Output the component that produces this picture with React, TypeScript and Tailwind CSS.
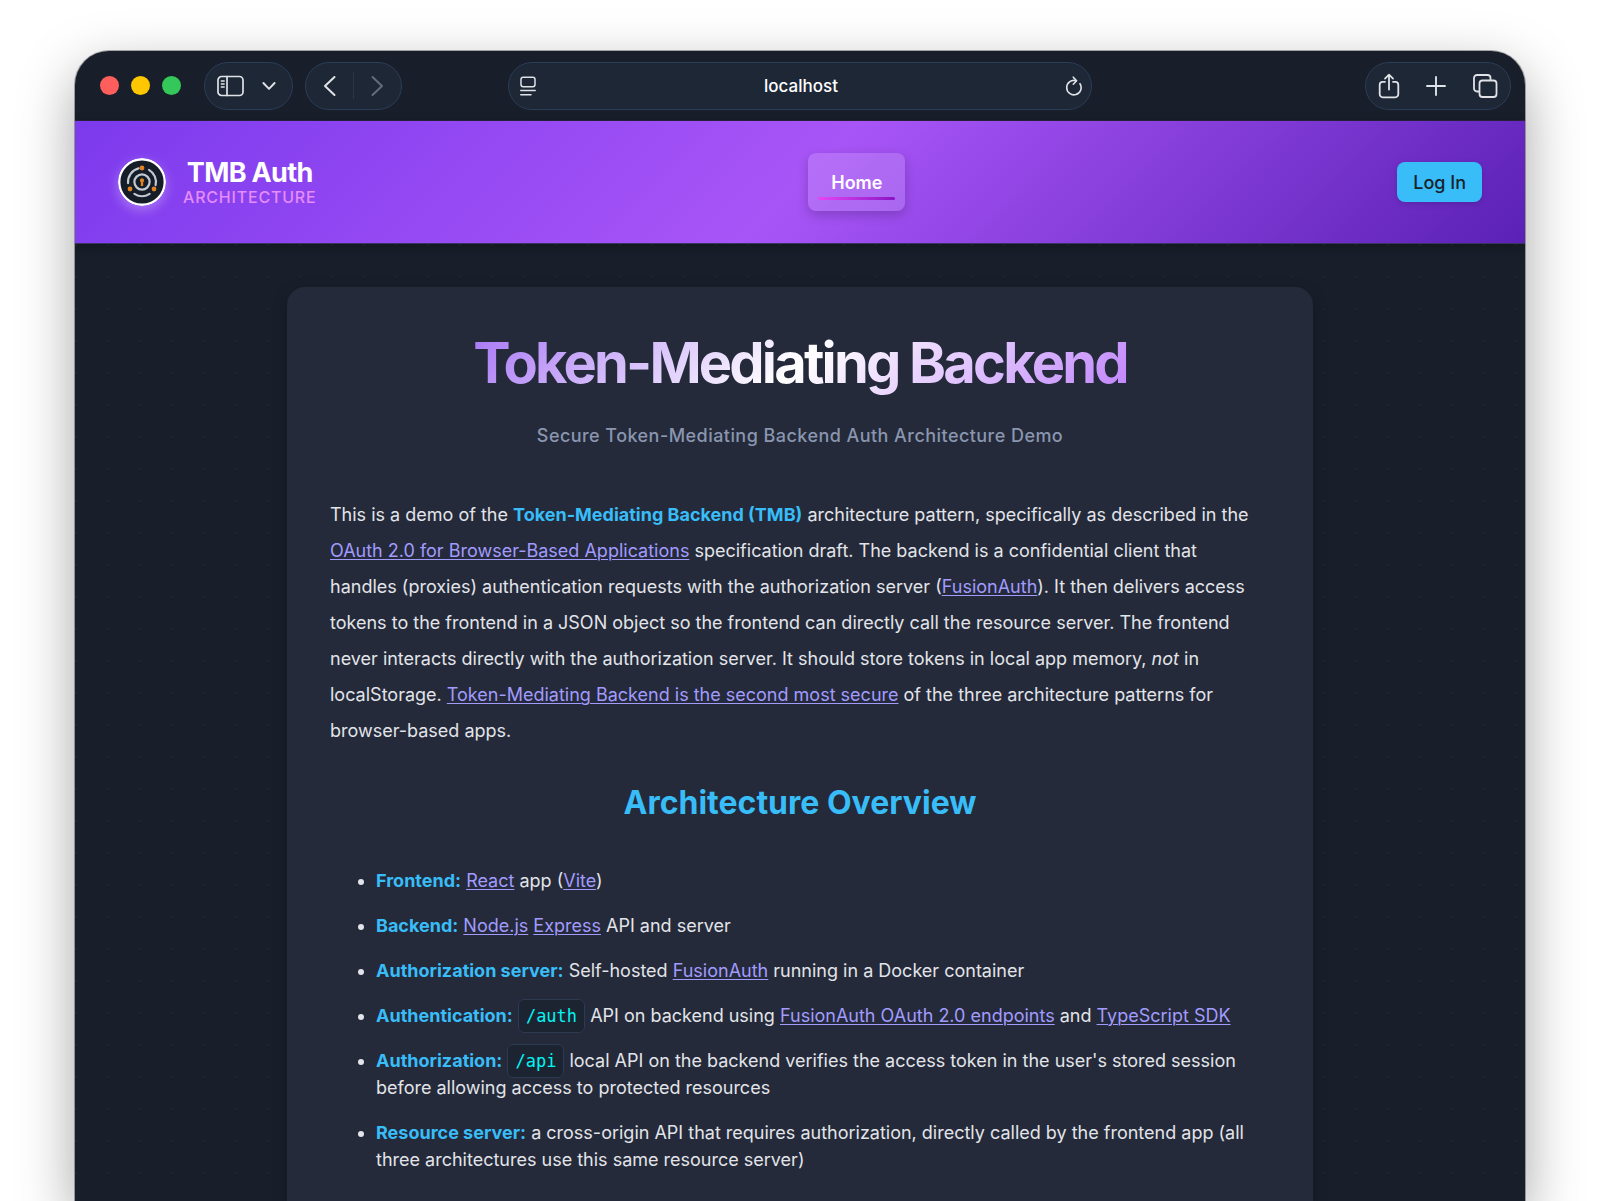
import React from "react";

const linkClass = "text-[#a29bfe] underline underline-offset-2 decoration-1";

function A({ children }: { children: React.ReactNode }) {
  return (
    <a href="#" className={linkClass}>
      {children}
    </a>
  );
}

function B({ children }: { children: React.ReactNode }) {
  return <strong className="font-bold text-[#38bdf8]">{children}</strong>;
}

function Code({ children }: { children: React.ReactNode }) {
  return (
    <code className="rounded-md border border-[#2c3a54] bg-[#1d2431] px-[7px] py-[6px] font-['DejaVu_Sans_Mono',monospace] text-[17px] leading-none text-[#00f5f5]">
      {children}
    </code>
  );
}

function LogoMark() {
  return (
    <svg viewBox="0 0 48 48" className="size-12 rounded-full shadow-[0_4px_12px_rgba(255,255,255,0.3)]" fill="none" aria-hidden="true">
      <circle cx="24" cy="24" r="22.8" fill="#141d28" stroke="#fff" strokeWidth="2.4" />
      <g stroke="#c3c9d2" strokeWidth="2.2" strokeLinecap="round">
        <circle cx="24" cy="24" r="7.6" />
        <path d="M10.1 25.2A14 14 0 0 1 20.6 10.4" />
        <path d="M31 11.9A14 14 0 0 1 37.6 27.1" />
        <path d="M31.6 35.8A14 14 0 0 1 16.4 35.8" />
      </g>
      <g fill="#e08222">
        <circle cx="24" cy="10" r="2.4" />
        <circle cx="12" cy="31" r="2.4" />
        <circle cx="36" cy="31" r="2.4" />
        <path d="M24 20.300a2.200 2.200 0 0 1 1.200 4V28h-2.400v-3.700a2.200 2.200 0 0 1 1.200-4z" />
      </g>
    </svg>
  );
}

const pill =
  "flex h-12 items-center rounded-full border border-[#2b3d57] bg-[#1e2735] text-[#dfe3e8]";

function Toolbar() {
  return (
    <div className="grid h-[70px] grid-cols-[1fr_minmax(0,584px)_1fr] items-center border-b border-[#2b2540]">
      <div className="flex items-center pl-[25px]">
        <div className="flex gap-3">
          <button aria-label="Close" className="size-[19px] rounded-full bg-[#ff5f5c]" />
          <button aria-label="Minimize" className="size-[19px] rounded-full bg-[#fec700]" />
          <button aria-label="Zoom" className="size-[19px] rounded-full bg-[#34c759]" />
        </div>
        <div className={`${pill} ml-[23px] gap-[17px] px-3`}>
          <button aria-label="Sidebar">
            <svg width="28" height="22" viewBox="0 0 28 22" fill="none" stroke="currentColor" strokeWidth="1.7" strokeLinecap="round">
              <rect x="1" y="1.500" width="25" height="19" rx="3.6" />
              <path d="M10 1.5v19" />
              <path d="M4.300 6h2.9M4.300 9h2.9M4.300 12h2.9" strokeWidth="1.4" />
            </svg>
          </button>
          <button aria-label="Sidebar options" className="pr-1">
            <svg width="14" height="10" viewBox="0 0 14 10" fill="none" stroke="currentColor" strokeWidth="1.9" strokeLinecap="round" strokeLinejoin="round">
              <path d="M1.4 2 7 7.8 12.6 2" />
            </svg>
          </button>
        </div>
        <div className={`${pill} ml-3 gap-[17px] px-[17px]`}>
          <button aria-label="Back">
            <svg width="13" height="22" viewBox="0 0 13 22" fill="none" stroke="currentColor" strokeWidth="2" strokeLinecap="round" strokeLinejoin="round">
              <path d="M11.5 2 2 11l9.500 9" />
            </svg>
          </button>
          <span className="h-[27px] w-px bg-[#2d3644]" />
          <button aria-label="Forward" className="text-[#646c79]">
            <svg width="13" height="22" viewBox="0 0 13 22" fill="none" stroke="currentColor" strokeWidth="2" strokeLinecap="round" strokeLinejoin="round">
              <path d="M1.500 2 11 11l-9.500 9" />
            </svg>
          </button>
        </div>
      </div>
      <div className={`${pill} justify-between pr-2 pl-[10px]`}>
        <button aria-label="Page menu">
          <svg width="18" height="20" viewBox="0 0 18 20" fill="none" stroke="currentColor" strokeWidth="1.5" strokeLinecap="round">
            <rect x="2" y="1.300" width="14" height="9.400" rx="2.200" />
            <path d="M1.800 14.600h14.400M1.800 18.700h10.200" />
          </svg>
        </button>
        <input
          aria-label="Address"
          defaultValue="localhost"
          className="w-full min-w-0 flex-1 bg-transparent pt-0.5 text-center text-[17px] font-medium text-white outline-none"
        />
        <button aria-label="Reload">
          <svg width="18" height="20" viewBox="0 0 18 20" fill="none" stroke="currentColor" strokeWidth="1.600" strokeLinecap="round" strokeLinejoin="round">
            <path d="M15 7.800A7.200 7.200 0 1 1 10.800 4.700" />
            <path d="M8.300 1.200 11.600 4.700 8.300 8.200" />
          </svg>
        </button>
      </div>
      <div className={`${pill} mr-[14px] justify-between gap-[26px] justify-self-end px-3`}>
        <button aria-label="Share">
          <svg width="22" height="26" viewBox="0 0 22 26" fill="none" stroke="currentColor" strokeWidth="1.800" strokeLinecap="round" strokeLinejoin="round">
            <path d="M7 8.800H4.700a3 3 0 0 0-3 3v9.500a3 3 0 0 0 3 3h12.600a3 3 0 0 0 3-3v-9.500a3 3 0 0 0-3-3H15" />
            <path d="M11 16.500V1.800M7 5.600l4-4 4 4" />
          </svg>
        </button>
        <button aria-label="New tab">
          <svg width="20" height="20" viewBox="0 0 20 20" fill="none" stroke="currentColor" strokeWidth="1.900" strokeLinecap="round">
            <path d="M10 1v18M1 10h18" />
          </svg>
        </button>
        <button aria-label="Tab overview">
          <svg width="26" height="26" viewBox="0 0 26 26" fill="none" stroke="currentColor" strokeWidth="1.800" strokeLinejoin="round">
            <rect x="7.500" y="7.500" width="17" height="16.500" rx="3" />
            <path d="M7.500 18.500H5a3 3 0 0 1-3-3V5a3 3 0 0 1 3-3h10.500a3 3 0 0 1 3 3v2.500" />
          </svg>
        </button>
      </div>
    </div>
  );
}

function Header() {
  return (
    <header className="flex h-[123px] items-center justify-between border-b border-[#3a3560] bg-[linear-gradient(135deg,#7c3aed_0%,#a855f7_50%,#5b21b6_100%)] px-[43px] shadow-[0_2px_10px_rgba(0,0,0,0.3)]">
      <a href="#" className="flex items-center gap-[17px]">
        <LogoMark />
        <span className="flex flex-col items-center pt-0.5">
          <span className="text-[27px] leading-7 font-bold tracking-tight text-white">TMB Auth</span>
          <span className="text-[16px] leading-5 font-medium tracking-wider text-[#e68cfb]">ARCHITECTURE</span>
        </span>
      </a>
      <nav>
        <a
          href="#"
          className="relative flex h-[58px] items-center rounded-lg bg-white/15 px-[23px] text-[18px] font-semibold text-white shadow-[0_4px_12px_rgba(0,0,0,0.2)]"
        >
          Home
          <span className="absolute inset-x-[10px] bottom-[11px] h-[3px] rounded-full bg-linear-to-r from-[#e645f5] to-[#8b12c4]" />
        </a>
      </nav>
      <button className="h-10 rounded-lg bg-[#38bdf8] px-4 text-[18px] font-medium text-[#1a212d] shadow-[0_2px_6px_rgba(0,0,0,0.15)]">
        Log In
      </button>
    </header>
  );
}

export default function App() {
  return (
    <div className="flex min-h-screen flex-col overflow-hidden bg-white px-[75px] pt-[51px] font-[Inter,sans-serif]">
      <div className="flex flex-1 flex-col overflow-hidden rounded-t-[34px] bg-[#181f2a] shadow-[0_0_0_1px_rgba(0,0,0,0.3),0_20px_56px_rgba(0,0,0,0.36)]">
        <Toolbar />
        <Header />
        <main className="flex flex-1 flex-col items-center bg-[radial-gradient(circle_at_1px_1px,rgba(30,60,65,0.25)_1px,transparent_1px)] bg-[size:32px_32px] px-6 pt-[43px]">
          <article className="w-full max-w-[1026px] flex-1 rounded-t-[18px] bg-[#242a39] px-[43px] pt-[43px] pb-4 text-[18px] text-[#e2e4e9] shadow-[0_4px_16px_rgba(0,0,0,0.2)]">
            <div className="flex flex-col items-center">
              <h1 className="bg-[linear-gradient(135deg,#a877f5_0%,#ffffff_50%,#c084fc_100%)] bg-clip-text text-center text-[56px] leading-[66px] font-bold tracking-tighter text-transparent">
                Token-Mediating Backend
              </h1>
              <p className="mt-[26px] text-center leading-[27px] font-medium tracking-wide text-[#8a96b0]">
                Secure Token-Mediating Backend Auth Architecture Demo
              </p>
            </div>
            <p className="mt-[48px] max-w-[926px] leading-[36px]">
              This is a demo of the <B>Token-Mediating Backend (TMB)</B> architecture pattern, specifically as described in the{" "}
              <A>OAuth 2.0 for Browser-Based Applications</A> specification draft. The backend is a confidential client that handles
              (proxies) authentication requests with the authorization server (<A>FusionAuth</A>). It then delivers access tokens to
              the frontend in a JSON object so the frontend can directly call the resource server. The frontend never interacts
              directly with the authorization server. It should store tokens in local app memory, <em>not</em> in localStorage.{" "}
              <A>Token-Mediating Backend is the second most secure</A> of the three architecture patterns for browser-based apps.
            </p>
            <h2 className="mt-[33px] text-center text-[32px] leading-[42px] font-bold text-[#38bdf8]">Architecture Overview</h2>
            <ul className="mt-[43px] list-disc space-y-[18px] pl-[46px] leading-[27px]">
              <li>
                <B>Frontend:</B> <A>React</A> app (<A>Vite</A>)
              </li>
              <li>
                <B>Backend:</B> <A>Node.js</A> <A>Express</A> API and server
              </li>
              <li>
                <B>Authorization server:</B> Self-hosted <A>FusionAuth</A> running in a Docker container
              </li>
              <li>
                <B>Authentication:</B> <Code>/auth</Code> API on backend using <A>FusionAuth OAuth 2.0 endpoints</A> and{" "}
                <A>TypeScript SDK</A>
              </li>
              <li>
                <B>Authorization:</B> <Code>/api</Code> local API on the backend verifies the access token in the user's stored
                session before allowing access to protected resources
              </li>
              <li>
                <B>Resource server:</B> a cross-origin API that requires authorization, directly called by the frontend app (all
                three architectures use this same resource server)
              </li>
            </ul>
          </article>
        </main>
      </div>
    </div>
  );
}
